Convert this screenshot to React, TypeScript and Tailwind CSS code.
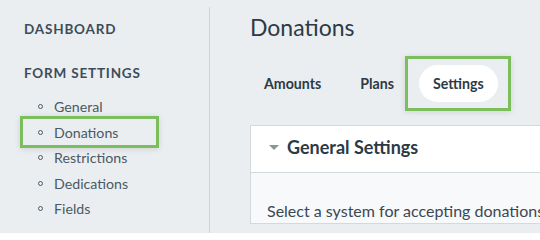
import { ReactNode } from "react"

const NAV = ["General", "Donations", "Restrictions", "Dedications", "Fields"]
const TABS = ["Amounts", "Plans", "Settings"]

function Highlight({ className }: { className: string }) {
	return (
		<span
			aria-hidden
			className={`pointer-events-none absolute border-[3px] border-[#7bbf5c] shadow-[0_1px_6px_rgba(0,0,0,0.12)] ${className}`}
		/>
	)
}

function SectionTitle({ children }: { children: ReactNode }) {
	return (
		<h3 className="text-[13.5px] font-bold uppercase leading-5 tracking-[0.06em] text-[#3c4d5a]">
			{children}
		</h3>
	)
}

export default function App() {
	return (
		<div
			className="flex h-[233px] w-[540px] overflow-hidden bg-[#ebeef0] text-[#2c3a45]"
			style={{ fontFamily: "Lato, 'Open Sans', sans-serif" }}
		>
			<aside className="mt-[7px] w-[210px] shrink-0 border-r border-[#cdd3d7] pl-6 pt-[12px]">
				<SectionTitle>Dashboard</SectionTitle>
				<div className="mt-[24px]">
					<SectionTitle>Form Settings</SectionTitle>
				</div>
				<ul className="mt-[11px] pl-[14px]">
					{NAV.map((item) => (
						<li
							key={item}
							className="relative flex h-[25.5px] items-center gap-[11px] text-[14.2px] text-[#4a5965]"
						>
							<span className="size-[5px] rounded-full border border-[#4a5965]" />
							{item}
							{item === "Donations" && (
								<Highlight className="-left-[18px] top-[-4px] h-[32px] w-[139px]" />
							)}
						</li>
					))}
				</ul>
			</aside>

			<main className="min-w-0 flex-1 pl-10 pt-[11px]">
				<h1 className="text-[23px] font-normal leading-8 text-[#2c3a45]">
					Donations
				</h1>
				<nav className="mt-[22px] flex gap-[11px]">
					{TABS.map((tab) => (
						<div
							key={tab}
							className={`relative flex h-[37px] items-center rounded-full px-[14px] text-[14.2px] font-bold ${
								tab === "Settings" ? "bg-white" : ""
							}`}
						>
							{tab}
							{tab === "Settings" && (
								<Highlight className="-left-[14px] -right-[13px] -top-[9px] -bottom-[9px]" />
							)}
						</div>
					))}
				</nav>
				<section className="mt-[23px] w-[320px] border border-[#d4d9dc] bg-[#f8f9fa]">
					<header className="flex h-[47px] items-center gap-2 border-b border-[#d4d9dc] bg-white pb-[3px] pl-[18px]">
						<svg width="10" height="5" viewBox="0 0 10 5" aria-hidden>
							<path d="M0 0h10L5 5z" fill="#8a949b" />
						</svg>
						<h2 className="text-[18px] font-bold text-[#2c3a45]">
							General Settings
						</h2>
					</header>
					<p className="whitespace-nowrap pl-4 pt-[26px] text-[16px] text-[#3b4853]">
						Select a system for accepting donations
					</p>
				</section>
			</main>
		</div>
	)
}
